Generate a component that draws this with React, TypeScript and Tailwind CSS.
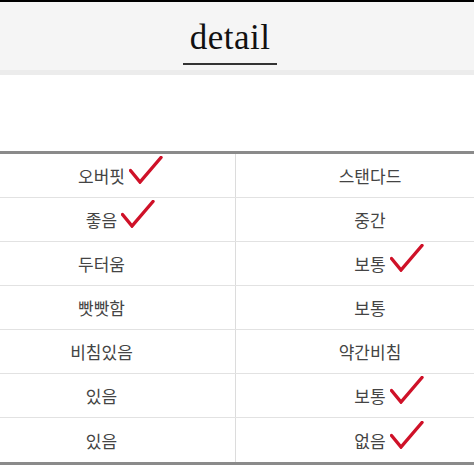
import React from 'react';

type Cell = { label: string; checked?: boolean };

const rows: [Cell, Cell][] = [
    [{ label: '오버핏', checked: true }, { label: '스탠다드' }],
    [{ label: '좋음', checked: true }, { label: '중간' }],
    [{ label: '두터움' }, { label: '보통', checked: true }],
    [{ label: '빳빳함' }, { label: '보통' }],
    [{ label: '비침있음' }, { label: '약간비침' }],
    [{ label: '있음' }, { label: '보통', checked: true }],
    [{ label: '있음' }, { label: '없음', checked: true }],
];

const Check = () => (
    <svg width="34" height="28" viewBox="0 0 34 28" className="absolute left-[calc(100%+4px)] top-[-7px]">
        <polyline
            points="1.5,14.5 11,26 32,1.5"
            fill="none"
            stroke="#cf1128"
            strokeWidth="3.4"
            strokeLinecap="round"
            strokeLinejoin="miter"
        />
    </svg>
);

const TableCell = ({ cell, left }: { cell: Cell; left?: boolean }) => (
    <div className={`w-[268px] flex items-center justify-center ${left ? 'border-r border-[#dcdcdc]' : ''}`}>
        <span className="relative inline-block leading-[25px]">
            {cell.label}
            {cell.checked && <Check />}
        </span>
    </div>
);

export default function App() {
    return (
        <div className="w-[474px] h-[474px] bg-white overflow-hidden">
            <div className="h-[2px] bg-black" />
            <div className="h-[68px] bg-[#f5f5f5] flex justify-center pr-[14px]">
                <div className="flex flex-col items-center">
                    <h1 className="mt-[16px] px-[6px] text-[35px] leading-[40px] tracking-[0.5px] text-[#111] font-['Liberation_Serif',serif]">
                        detail
                    </h1>
                    <div className="mt-[5px] w-[94px] h-[2px] bg-[#333]" />
                </div>
            </div>
            <div className="h-[5px] bg-[#ececec]" />
            <div className="h-[76px]" />
            <div className="ml-[-32px] w-[537px] border-t-[3px] border-b-[3px] border-[#8a8a8a] font-['Noto_Sans_CJK_KR',sans-serif] text-[17px] text-[#444]">
                {rows.map((row, i) => (
                    <div key={i} className={`flex h-[44px] ${i < rows.length - 1 ? 'border-b border-[#e2e2e2]' : ''}`}>
                        <TableCell cell={row[0]} left />
                        <TableCell cell={row[1]} />
                    </div>
                ))}
            </div>
        </div>
    );
}
